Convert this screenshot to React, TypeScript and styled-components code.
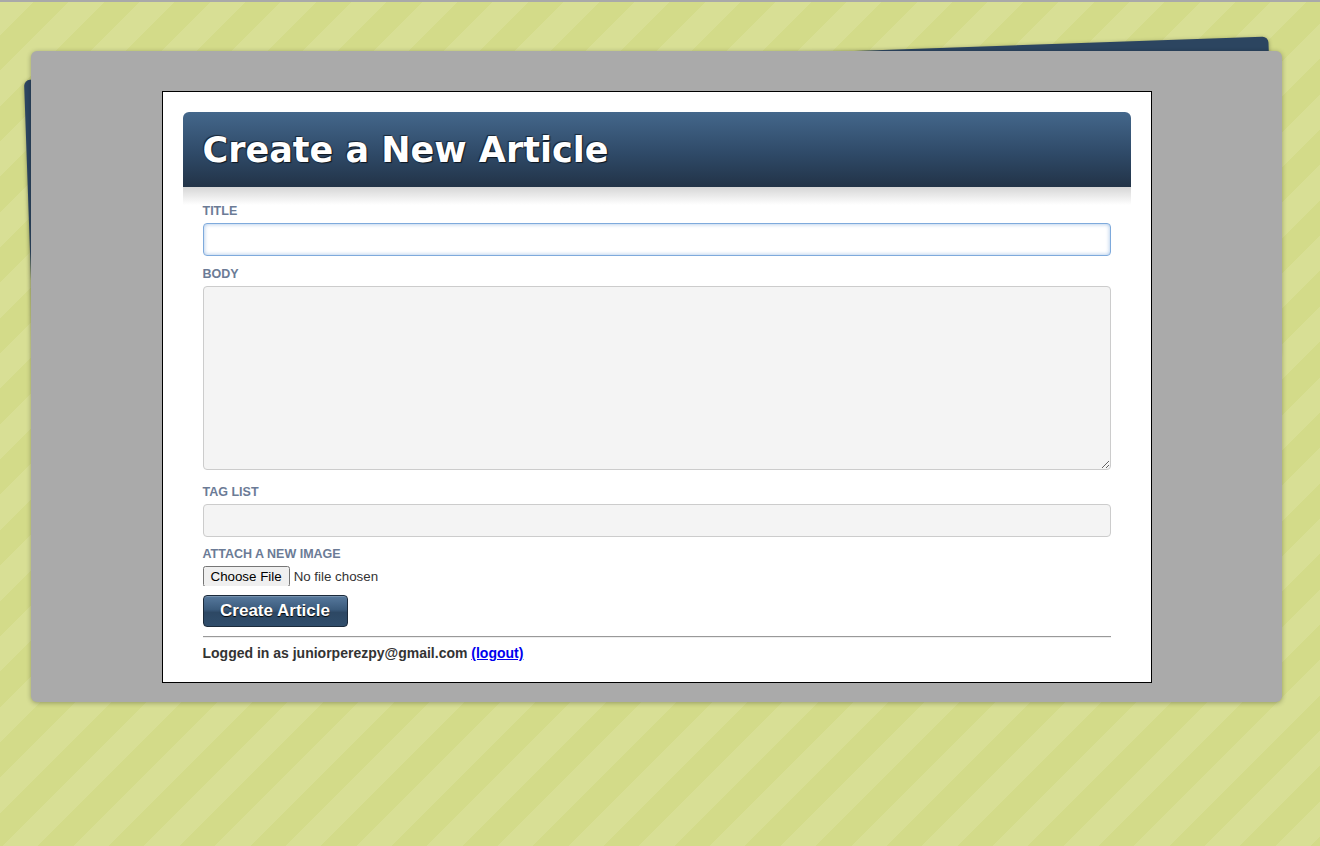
import React from "react";
import styled, { createGlobalStyle } from "styled-components";

const GlobalStyle = createGlobalStyle`
  html, body { margin: 0; padding: 0; }
  body {
    min-height: 846px;
    border-top: 2px solid #a9a9a9;
    box-sizing: border-box;
    background-color: #d5dd8b;
    background-image: repeating-linear-gradient(
      135deg,
      #d8df95 0px,
      #d8df95 25px,
      #d3db89 25px,
      #d3db89 50px
    );
    font-family: "Liberation Sans", Arial, sans-serif;
  }
`;

const Stage = styled.div`
  position: relative;
  margin: 49px 38px 0 31px;
`;

const BackCard = styled.div`
  position: absolute;
  top: 29px;
  left: -7px;
  width: 1245px;
  height: 320px;
  background: #2c4560;
  border-radius: 6px;
  transform-origin: top left;
  transform: rotate(-2deg);
  box-shadow: 0 1px 4px rgba(0, 0, 0, 0.35);
`;

const Card = styled.div`
  position: relative;
  background: #aaaaaa;
  border-radius: 6px;
  box-shadow: 0 1px 5px rgba(0, 0, 0, 0.3);
  padding: 40px 0 19px;
`;

const Sheet = styled.div`
  width: 948px;
  margin: 0 auto;
  background: #fff;
  border: 1px solid #000;
  padding: 20px 20px 20px;
`;

const Header = styled.div`
  height: 75px;
  border-radius: 6px 6px 0 0;
  background: linear-gradient(#44678b, #2f4a68 55%, #223347);
  display: flex;
  align-items: center;
  padding: 0 20px;
`;

const Title = styled.h1`
  margin: 0;
  font-family: "DejaVu Sans", Verdana, sans-serif;
  font-weight: bold;
  font-size: 35px;
  color: #fff;
  text-shadow: 1px 1px 1px #0d1620, -1px -1px 1px rgba(0, 0, 0, 0.55);
`;

const HeaderShade = styled.div`
  height: 18px;
  background: linear-gradient(#d6d6d6, #ffffff);
`;

const Form = styled.form`
  display: flex;
  flex-direction: column;
  align-items: flex-start;
  padding: 0 20px;
  margin-top: -2px;
`;

const Label = styled.label<{ $top: number }>`
  display: block;
  margin-top: ${(p) => p.$top}px;
  margin-bottom: 3px;
  font-size: 12.5px;
  line-height: 17px;
  font-weight: bold;
  color: #6b7b96;
  text-transform: uppercase;
`;

const TextInput = styled.input<{ $focused?: boolean }>`
  box-sizing: border-box;
  width: 100%;
  height: 33px;
  border-radius: 4px;
  font-family: "Liberation Sans", Arial, sans-serif;
  font-size: 14px;
  padding: 4px 8px;
  outline: none;
  border: 1px solid ${(p) => (p.$focused ? "#7eaadc" : "#cccccc")};
  background: ${(p) => (p.$focused ? "#ffffff" : "#f4f4f4")};
  box-shadow: ${(p) =>
    p.$focused ? "inset 0 0 4px rgba(120,165,220,0.7)" : "none"};
`;

const TextArea = styled.textarea`
  display: block;
  box-sizing: border-box;
  width: 100%;
  height: 184px;
  border-radius: 4px;
  border: 1px solid #cccccc;
  background: #f4f4f4;
  font-family: "Liberation Sans", Arial, sans-serif;
  font-size: 14px;
  padding: 6px 8px;
  outline: none;
`;

const FileInput = styled.input`
  font-family: "Liberation Sans", Arial, sans-serif;
  font-size: 13.33px;
  color: #333;
  margin: 0;
  height: 20px;
`;

const SubmitButton = styled.button`
  margin-top: 9px;
  width: 145px;
  height: 32px;
  border-radius: 4px;
  border: 1px solid #1b2a3b;
  background: linear-gradient(#57799d, #3b5b7c 45%, #2d4864 55%, #304d6b);
  box-shadow: inset 0 1px 0 rgba(255, 255, 255, 0.2);
  color: #fff;
  font-family: "Liberation Sans", Arial, sans-serif;
  font-weight: bold;
  font-size: 17px;
  text-shadow: 0 1px 1px #000;
  cursor: pointer;
  padding: 0;
`;

const Divider = styled.hr`
  align-self: stretch;
  margin: 9px 0 6px;
  border: 0;
  border-top: 1px solid #999;
  border-bottom: 1px solid #eee;
  height: 0;
`;

const Footer = styled.p`
  margin: 0;
  font-size: 14px;
  line-height: 18px;
  font-weight: bold;
  color: #333;
`;

const Logout = styled.a`
  color: #0000ee;
  text-decoration: underline;
`;

export default function App() {
  return (
    <>
      <GlobalStyle />
      <Stage>
        <BackCard />
        <Card>
          <Sheet>
            <Header>
              <Title>Create a New Article</Title>
            </Header>
            <HeaderShade />
            <Form onSubmit={(e) => e.preventDefault()}>
              <Label $top={0} htmlFor="title">Title</Label>
              <TextInput id="title" type="text" $focused />
              <Label $top={10} htmlFor="body">Body</Label>
              <TextArea id="body" />
              <Label $top={14} htmlFor="tags">Tag list</Label>
              <TextInput id="tags" type="text" />
              <Label $top={9} htmlFor="image">Attach a new image</Label>
              <FileInput id="image" type="file" />
              <SubmitButton type="submit">Create Article</SubmitButton>
              <Divider />
              <Footer>
                Logged in as juniorperezpy@gmail.com{" "}
                <Logout href="#">(logout)</Logout>
              </Footer>
            </Form>
          </Sheet>
        </Card>
      </Stage>
    </>
  );
}
